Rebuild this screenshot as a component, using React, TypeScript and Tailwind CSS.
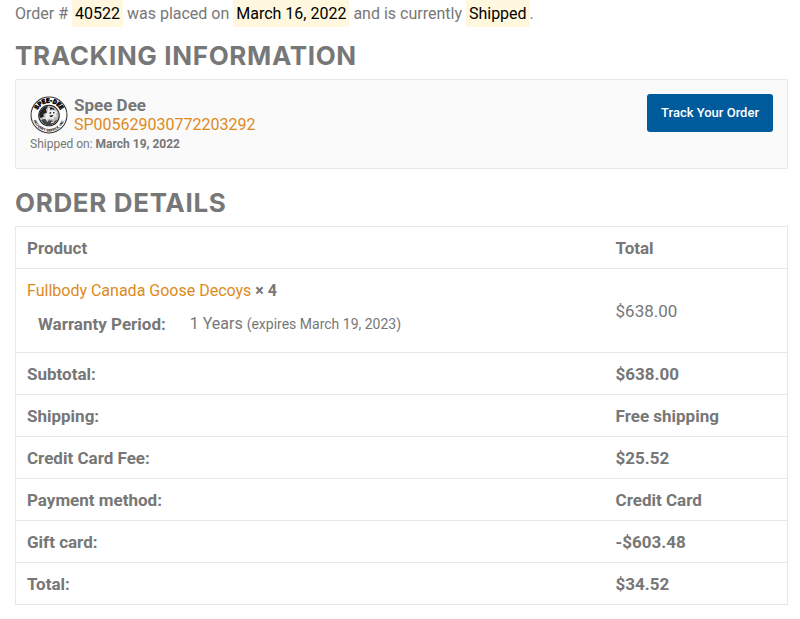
interface SummaryRow {
  label: string;
  value: string;
}

const summary: SummaryRow[] = [
  { label: "Subtotal:", value: "$638.00" },
  { label: "Shipping:", value: "Free shipping" },
  { label: "Credit Card Fee:", value: "$25.52" },
  { label: "Payment method:", value: "Credit Card" },
  { label: "Gift card:", value: "-$603.48" },
  { label: "Total:", value: "$34.52" },
];

function CarrierLogo() {
  return (
    <svg viewBox="0 0 74 74" className="size-[38px] shrink-0" role="img" aria-label="Spee-Dee Delivery Service, Inc.">
      <defs>
        <path id="arc-top" d="M 13 37 A 24 24 0 0 1 61 37" />
        <path id="arc-bottom" d="M 5 37 A 32 32 0 0 0 69 37" />
      </defs>
      <circle cx="37" cy="37" r="35" fill="#fff" stroke="#333" strokeWidth="2" />
      <text fontFamily="Roboto, sans-serif" fontSize="12" fontWeight="900" fill="#000" stroke="#000" strokeWidth="1">
        <textPath href="#arc-top" startOffset="50%" textAnchor="middle">SPEE-DEE</textPath>
      </text>
      <text fontFamily="Roboto, sans-serif" fontSize="7" fontWeight="900" fill="#222">
        <textPath href="#arc-bottom" startOffset="50%" textAnchor="middle">DELIVERY SERVICE, INC.</textPath>
      </text>
      <circle cx="37" cy="38" r="20" fill="#bbb" stroke="#222" strokeWidth="2" />
      {/* Runner figure */}
      <path d="M19 32c3-7 9-12 16-12l-4 7 2 5-7 3 1 5-6 3c-3-3-4-7-2-11z" fill="#222" />
      <path d="M35 24c6-4 13-1 14 5l4 2-3 4 3 5-6 1-2 5-6-2-6 2-4-6 2-5 3-3z" fill="#eee" />
      <path d="M38 22c5-1 10 2 10 6l-5-2-3 2zM38 32l3-1 0 3-3 1zM45 31l3 0-1 3-2 0zM38 38l8-1-3 4-4 0z" fill="#222" />
      <path d="M22 47l8-4 4 5 7-1 5 3 7-4c-3 7-9 11-16 11-6 0-12-4-15-10z" fill="#444" />
      <path d="M26 43l6 2 2 5M41 52l6-2" fill="none" stroke="#fff" strokeWidth="2" />
    </svg>
  );
}

export default function App() {
  return (
    <main className="min-h-screen bg-white pr-3 pb-3 pl-[15px] font-['Roboto',sans-serif] text-[17px] leading-5 text-[#777]">
      <p className="text-base leading-7">
        Order # <mark className="bg-[#fff8de] px-[3px] py-1 text-black">40522</mark> was placed on{" "}
        <mark className="bg-[#fff8de] px-[3px] py-1 text-black">March 16, 2022</mark> and is currently{" "}
        <mark className="bg-[#fff8de] px-[3px] py-1 text-black">Shipped</mark>.
      </p>

      <h2 className="mt-3 font-['Inter',sans-serif] text-[26px] leading-8 font-bold tracking-wide uppercase">
        Tracking Information
      </h2>
      <section className="mt-[7px] flex items-start justify-between rounded-xs border border-[#e8e8e8] bg-[#fafafa] p-3.5">
        <div>
          <div className="flex items-center gap-1.5">
            <CarrierLogo />
            <div className="pt-px">
              <strong className="block text-[17px] leading-5">Spee Dee</strong>
              <a href="#tracking" className="block text-base leading-5 text-[#dd8a1c]">SP005629030772203292</a>
            </div>
          </div>
          <p className="text-xs leading-[19px]">
            Shipped on: <strong>March 19, 2022</strong>
          </p>
        </div>
        <button type="button" className="h-[38px] rounded-[3px] bg-[#005b9c] px-3.5 text-[13px] font-medium text-white">
          Track Your Order
        </button>
      </section>

      <h2 className="mt-[18px] font-['Inter',sans-serif] text-[26px] leading-8 font-bold tracking-wide uppercase">
        Order Details
      </h2>
      <table className="mt-[7px] w-full table-fixed border-collapse text-left [&_td]:border-y [&_td]:border-[#e8e8e8] [&_td]:px-[11px] [&_th]:border-y [&_th]:border-[#e8e8e8] [&_th]:px-[11px]">
        <colgroup>
          <col className="w-[76.3%]" />
          <col />
        </colgroup>
        <thead>
          <tr className="h-[42px] border-x border-[#e8e8e8]">
            <th scope="col">Product</th>
            <th scope="col">Total</th>
          </tr>
        </thead>
        <tbody>
          <tr className="h-[84px] border-x border-[#e8e8e8]">
            <td className="pt-3 align-top">
              <div className="text-base leading-5">
                <a href="#product" className="text-[#dd8a1c]">Fullbody Canada Goose Decoys</a>{" "}
                <strong>× 4</strong>
              </div>
              <dl className="mt-[13px] ml-[11px] flex gap-6">
                <dt className="font-bold">Warranty Period:</dt>
                <dd className="text-base leading-5">
                  1 Years <span className="text-sm leading-5">(expires March 19, 2023)</span>
                </dd>
              </dl>
            </td>
            <td>$638.00</td>
          </tr>
        </tbody>
        <tfoot>
          {summary.map((row) => (
            <tr key={row.label} className="h-[42px] border-x border-[#e8e8e8]">
              <th scope="row">{row.label}</th>
              <td className="font-bold">{row.value}</td>
            </tr>
          ))}
        </tfoot>
      </table>
    </main>
  );
}
